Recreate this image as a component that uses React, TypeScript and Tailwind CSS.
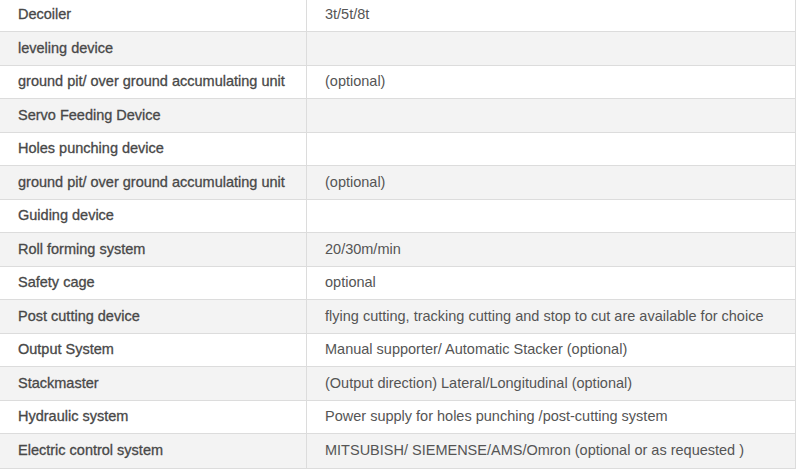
import React from "react";

const rows: [string, string][] = [
  ["Decoiler", "3t/5t/8t"],
  ["leveling device", ""],
  ["ground pit/ over ground accumulating unit", "(optional)"],
  ["Servo Feeding Device", ""],
  ["Holes punching device", ""],
  ["ground pit/ over ground accumulating unit", "(optional)"],
  ["Guiding device", ""],
  ["Roll forming system", "20/30m/min"],
  ["Safety cage", "optional"],
  ["Post cutting device", "flying cutting, tracking cutting and stop to cut are available for choice"],
  ["Output System", "Manual supporter/ Automatic Stacker (optional)"],
  ["Stackmaster", "(Output direction) Lateral/Longitudinal (optional)"],
  ["Hydraulic system", "Power supply for holes punching /post-cutting system"],
  ["Electric control system", "MITSUBISH/ SIEMENSE/AMS/Omron (optional or as requested )"],
];

export default function App() {
  return (
    <div className="w-[800px] h-[470px] overflow-hidden bg-white" style={{ fontFamily: '"Liberation Sans", Arial, sans-serif' }}>
      <div className="w-[796px] -mt-[1.5px] border-r border-b border-[#dcdcdc]">
        {rows.map(([a, b], i) => (
          <div
            key={i}
            className={`flex h-[33.5px] border-b border-[#dcdcdc] last:border-b-0 ${i % 2 === 1 ? "bg-[#f3f3f3]" : "bg-white"}`}
          >
            <div className="w-[307px] shrink-0 border-r border-[#dcdcdc] pl-[18px] pt-[1px] flex items-center text-[14.5px] text-[#484848] [-webkit-text-stroke:0.3px_#484848]">
              {a}
            </div>
            <div className="flex-1 pl-[18px] pt-[1px] flex items-center text-[14.5px] text-[#555]">{b}</div>
          </div>
        ))}
      </div>
    </div>
  );
}
